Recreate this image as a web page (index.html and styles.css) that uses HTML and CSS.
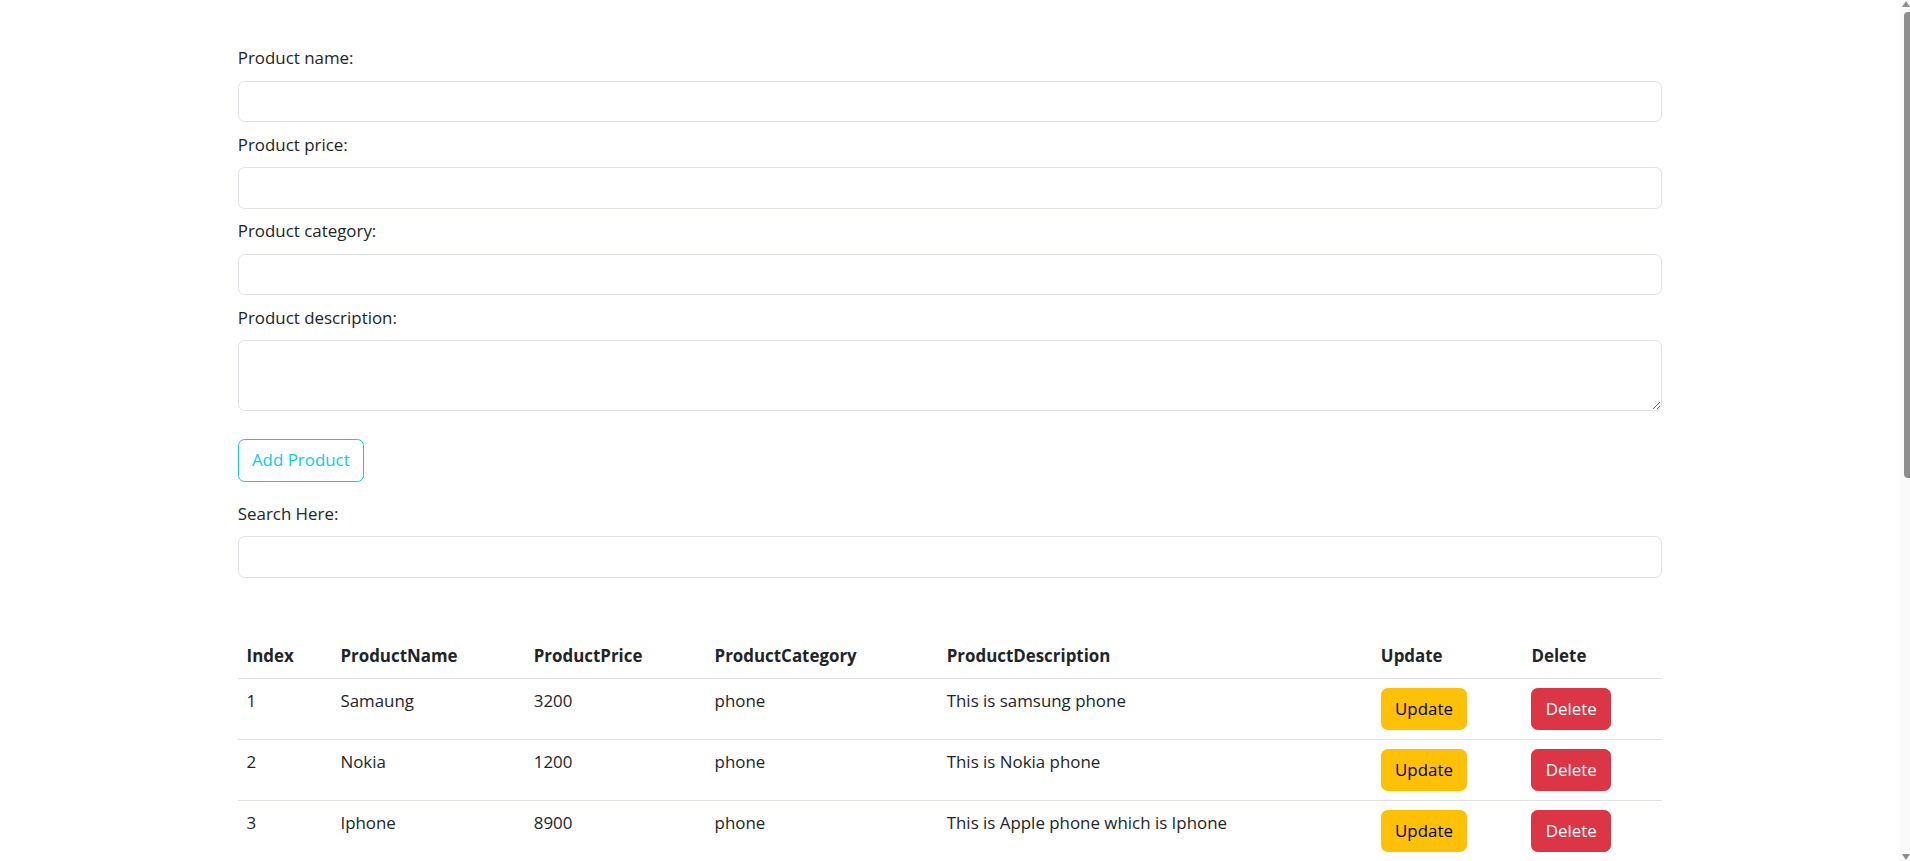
FILE: index.html
```html
<!DOCTYPE html>
<html lang="en">
<head>
<meta charset="utf-8">
<title>Products</title>
<link rel="stylesheet" href="styles.css">
</head>
<body>
<div class="container">
  <div class="group">
    <label class="form-label" for="pname">Product name:</label>
    <input class="control" id="pname" type="text">
  </div>
  <div class="group">
    <label class="form-label" for="pprice">Product price:</label>
    <input class="control" id="pprice" type="text">
  </div>
  <div class="group">
    <label class="form-label" for="pcat">Product category:</label>
    <input class="control" id="pcat" type="text">
  </div>
  <div class="group">
    <label class="form-label" for="pdesc">Product description:</label>
    <textarea class="control area" id="pdesc"></textarea>
  </div>
  <button class="btn btn-outline-info add-btn" type="button">Add Product</button>
  <div class="group search">
    <label class="form-label" for="search">Search Here:</label>
    <input class="control" id="search" type="text">
  </div>

  <table class="table">
    <colgroup>
      <col class="c-index">
      <col class="c-name">
      <col class="c-price">
      <col class="c-cat">
      <col class="c-desc">
      <col class="c-upd">
      <col class="c-del">
    </colgroup>
    <thead>
      <tr>
        <th>Index</th>
        <th>ProductName</th>
        <th>ProductPrice</th>
        <th>ProductCategory</th>
        <th>ProductDescription</th>
        <th>Update</th>
        <th>Delete</th>
      </tr>
    </thead>
    <tbody>
      <tr>
        <td>1</td>
        <td>Samaung</td>
        <td>3200</td>
        <td>phone</td>
        <td>This is samsung phone</td>
        <td><button class="btn btn-warning" type="button">Update</button></td>
        <td><button class="btn btn-danger" type="button">Delete</button></td>
      </tr>
      <tr>
        <td>2</td>
        <td>Nokia</td>
        <td>1200</td>
        <td>phone</td>
        <td>This is Nokia phone</td>
        <td><button class="btn btn-warning" type="button">Update</button></td>
        <td><button class="btn btn-danger" type="button">Delete</button></td>
      </tr>
      <tr>
        <td>3</td>
        <td>Iphone</td>
        <td>8900</td>
        <td>phone</td>
        <td>This is Apple phone which is Iphone</td>
        <td><button class="btn btn-warning" type="button">Update</button></td>
        <td><button class="btn btn-danger" type="button">Delete</button></td>
      </tr>
    </tbody>
  </table>
</div>

<div class="scrollbar" aria-hidden="true">
  <svg class="arrow arrow-up" width="8" height="6" viewBox="0 0 8 6"><polygon points="4,0 8,6 0,6" fill="#8d8d8d"/></svg>
  <div class="thumb"></div>
  <svg class="arrow arrow-down" width="8" height="6" viewBox="0 0 8 6"><polygon points="0,0 8,0 4,6" fill="#8d8d8d"/></svg>
</div>
</body>
</html>
```
FILE: styles.css
```css
* {
  box-sizing: border-box;
}

html {
  background: #fff;
}

body {
  margin: 0 10px 0 0;
  font-family: "Open Sans", "Noto Sans", sans-serif;
  font-size: 16.9px;
  line-height: 26.4px;
  color: #212529;
  background: #fff;
}

.container {
  width: 1452px;
  margin: 0 auto;
  padding: 45.3px 13.75px 40px;
}

.group {
  margin-bottom: 9.5px;
}

.form-label {
  display: block;
  margin-bottom: 8.8px;
}

.control {
  display: block;
  width: 100%;
  height: 41.8px;
  padding: 6.6px 13.2px;
  font: inherit;
  color: #212529;
  background: #fff;
  border: 1px solid #dee2e6;
  border-radius: 6.6px;
  outline: none;
}

.area {
  height: 71.3px;
  resize: vertical;
}

.btn {
  display: inline-block;
  padding: 7px 13.2px;
  font: inherit;
  line-height: 26.4px;
  border: 1px solid transparent;
  border-radius: 6.6px;
  cursor: pointer;
  background: transparent;
}

.add-btn {
  margin-top: 18.5px;
  margin-bottom: 19.2px;
}

.btn-outline-info {
  color: #0dcaf0;
  border-color: #0dcaf0;
}

.btn-warning {
  color: #000;
  background: #ffc107;
  border-color: #ffc107;
}

.btn-danger {
  color: #fff;
  background: #dc3545;
  border-color: #dc3545;
}

.search {
  margin-bottom: 56px;
}

.table {
  width: 100%;
  border-collapse: collapse;
  table-layout: fixed;
}

.table th,
.table td {
  padding: 8.8px;
  text-align: left;
  border-bottom: 1px solid #dee2e6;
}

.table th {
  font-weight: 700;
  vertical-align: bottom;
}

.table td {
  vertical-align: top;
}

.c-index { width: 93.9px; }
.c-name { width: 193.3px; }
.c-price { width: 180.8px; }
.c-cat { width: 232.1px; }
.c-desc { width: 434.1px; }
.c-upd { width: 150.6px; }
.c-del { width: 139.5px; }

/* imitation of the browser's overlay scrollbar, drawn over the page edge */
.scrollbar {
  position: fixed;
  top: 0;
  right: 0;
  width: 10px;
  height: 100vh;
  background: #fafafa;
}

.arrow {
  position: absolute;
  right: 0;
}

.arrow-up {
  top: 1px;
}

.arrow-down {
  bottom: 1px;
}

.thumb {
  position: absolute;
  top: 12px;
  right: 0;
  width: 6px;
  height: 466px;
  background: #8d8d8d;
  border-radius: 4px 0 0 4px;
}
```
